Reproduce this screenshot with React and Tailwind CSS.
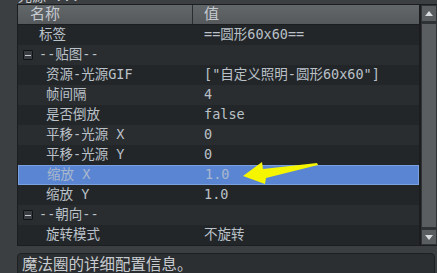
const font = { fontFamily: '"DejaVu Sans Mono", "Noto Sans CJK SC", monospace' };

const rows = [
  { type: "prop", label: "标签", value: "==圆形60x60==", indent: "pl-[21px]" },
  { type: "cat", label: "--贴图--" },
  { type: "prop", label: "资源-光源GIF", value: '["自定义照明-圆形60x60"]' },
  { type: "prop", label: "帧间隔", value: "4" },
  { type: "prop", label: "是否倒放", value: "false" },
  { type: "prop", label: "平移-光源 X", value: "0" },
  { type: "prop", label: "平移-光源 Y", value: "0" },
  { type: "prop", label: "缩放 X", value: "1.0", selected: true },
  { type: "prop", label: "缩放 Y", value: "1.0" },
  { type: "cat", label: "--朝向--" },
  { type: "prop", label: "旋转模式", value: "不旋转" },
];

function MinusBox() {
  return (
    <span className="w-[10px] h-[10px] border border-[#101214] bg-[#3a3e42] rounded-[1px] flex items-center justify-center">
      <span className="w-[6px] h-px bg-[#c8ccd0]" />
    </span>
  );
}

function Row({ r, i }) {
  const alt = i % 2 === 1;
  if (r.type === "cat") {
    return (
      <div
        className={`h-5 flex items-center ${alt ? "bg-[#2a2d30]" : "bg-[#232629]"}`}
      >
        <div className="pl-[5px] flex items-center gap-[6px]">
          <MinusBox />
          <span>{r.label}</span>
        </div>
      </div>
    );
  }
  return (
    <div
      className={`h-5 flex items-center ${
        r.selected
          ? "bg-[#5a85d3] border border-[#7ba0e0] text-[#a9b8cc]"
          : alt
          ? "bg-[#2a2d30]"
          : "bg-[#232629]"
      }`}
    >
      <div className={`w-[175px] whitespace-nowrap ${r.indent || "pl-[28px]"}`}>
        {r.label}
      </div>
      <div className="pl-[11px] whitespace-nowrap">{r.value}</div>
    </div>
  );
}

export default function App() {
  return (
    <div
      className="w-[437px] h-[273px] bg-[#3c3f41] text-[#bac1c8] text-[13.5px] leading-none overflow-hidden relative"
      style={font}
    >
      {/* title strip, cut at top */}
      <div className="h-[4px] overflow-hidden relative">
        <span className="absolute top-[-11px] left-[18px] text-[#c8ccd0] text-[14px] whitespace-nowrap">光源 ...</span>
      </div>

      <div className="flex pl-[17px] h-[242px]">
        {/* table */}
        <div className="flex-1 flex flex-col border border-[#1b1d1f] bg-[#232629]">
          <div className="h-5 flex items-center bg-gradient-to-b from-[#62676a] to-[#55595c] border-b border-[#1b1d1f] text-[#c5cad0] text-[15px]">
            <div className="w-[175px] pl-[12px] h-full flex items-center border-r border-[#2a2d30]">
              名称
            </div>
            <div className="pl-[11px]">值</div>
          </div>
          {rows.map((r, i) => (
            <Row key={i} r={r} i={i} />
          ))}
        </div>

        {/* scrollbar */}
        <div className="w-[17px] flex flex-col border-y border-l border-[#1b1d1f] bg-[#2e3133]">
          <div className="h-[17px] bg-[#5a5e61] border border-[#303335] flex items-center justify-center">
            <svg width="8" height="5" viewBox="0 0 8 5">
              <path d="M4 0 L8 5 L0 5 Z" fill="#d8dcdf" />
            </svg>
          </div>
          <div className="flex-1 bg-[#5a5e61] border border-[#303335] mt-px" />
          <div className="h-[16px] bg-[#5a5e61] border border-[#303335] flex items-center justify-center mt-px">
            <svg width="8" height="5" viewBox="0 0 8 5">
              <path d="M0 0 L8 0 L4 5 Z" fill="#d8dcdf" />
            </svg>
          </div>
        </div>
      </div>

      {/* description panel */}
      <div className="mt-[7px] ml-[17px] mr-[2px] h-[40px] border border-[#1e2022] rounded-t-[4px] bg-[#2c2f31] px-[4px] pt-[4px] text-[#c8ccd0] text-[15.5px] whitespace-nowrap">
        魔法圈的详细配置信息。
      </div>

      {/* annotation arrow */}
      <svg
        className="absolute left-0 top-0 pointer-events-none"
        width="437"
        height="273"
        viewBox="0 0 437 273"
      >
        <path
          d="M243 176 L262 162 L263 169 L317 163 L318 165 L266 178 L265 184 Z"
          fill="#f5f500"
        />
      </svg>
    </div>
  );
}
